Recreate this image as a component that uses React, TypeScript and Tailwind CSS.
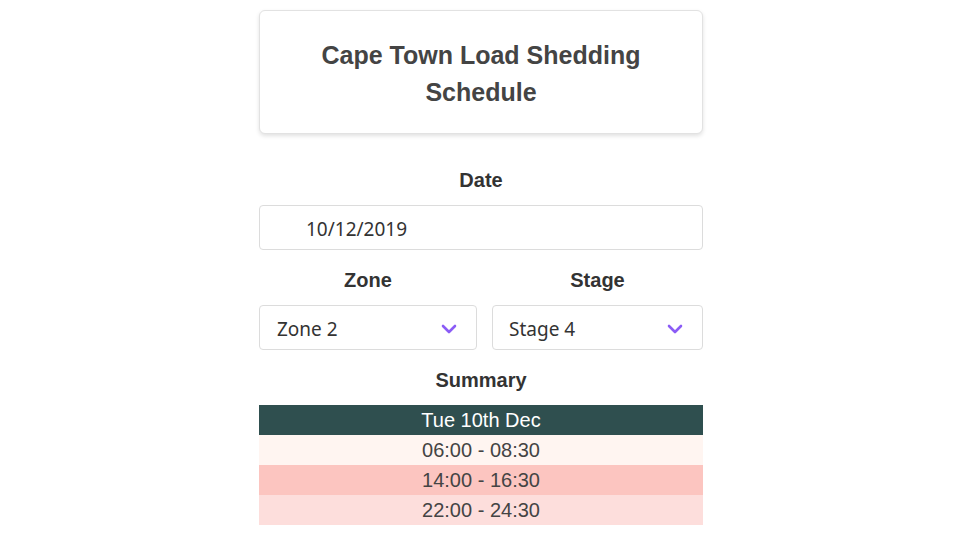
import React from "react";

const Chevron = () => (
  <svg width="16" height="10" viewBox="0 0 16 10" fill="none" className="translate-y-[1px]">
    <path d="M2 2 L8 8 L14 2" stroke="#8b5cf6" strokeWidth="2.6" strokeLinecap="round" strokeLinejoin="round" />
  </svg>
);

export default function App() {
  return (
    <div className="min-h-[540px] bg-white pl-[2px]" style={{ fontFamily: '"Liberation Sans", Arial, sans-serif' }}>
      <div className="mx-auto w-[444px] pt-[10px]">
        <div className="rounded-[6px] border border-[#e2e2e2] bg-white pb-[22px] pt-[26px] shadow-[0_2px_4px_rgba(0,0,0,0.12)]">
          <h1 className="text-center text-[25px] font-bold leading-[37px] text-[#444]">
            Cape Town Load Shedding
            <br />
            Schedule
          </h1>
        </div>

        <div className="mt-[31px] text-center text-[20px] font-bold leading-[30px] text-[#333]">Date</div>
        <div
          className="mt-[10px] flex h-[45px] items-center rounded-[4px] border border-[#dcdcdc] pl-[46px] text-[19px] text-[#333]"
          style={{ fontFamily: '"Noto Sans", "Open Sans", sans-serif' }}
        >
          <span className="translate-y-[2px]">10/12/2019</span>
        </div>

        <div className="mt-[15px] grid grid-cols-[218px_211px] gap-x-[15px]">
          <div className="text-center text-[20px] font-bold leading-[30px] text-[#333]">Zone</div>
          <div className="text-center text-[20px] font-bold leading-[30px] text-[#333]">Stage</div>
          <div
            className="mt-[10px] flex h-[45px] items-center justify-between rounded-[4px] border border-[#dcdcdc] pl-[17px] pr-[19px] text-[19px] text-[#333]"
            style={{ fontFamily: '"Noto Sans", "Open Sans", sans-serif' }}
          >
            <span className="translate-y-[2px]">Zone 2</span>
            <Chevron />
          </div>
          <div
            className="mt-[10px] flex h-[45px] items-center justify-between rounded-[4px] border border-[#dcdcdc] pl-[16px] pr-[19px] text-[19px] text-[#333]"
            style={{ fontFamily: '"Noto Sans", "Open Sans", sans-serif' }}
          >
            <span className="translate-y-[2px]">Stage 4</span>
            <Chevron />
          </div>
        </div>

        <div className="mt-[15px] text-center text-[20px] font-bold leading-[30px] text-[#333]">Summary</div>
        <div className="mt-[10px] text-center text-[20px] leading-[30px]">
          <div className="bg-[#2f4f4f] text-white">Tue 10th Dec</div>
          <div className="bg-[#fff5f1] text-[#444]">06:00 - 08:30</div>
          <div className="bg-[#fcc5c0] text-[#444]">14:00 - 16:30</div>
          <div className="bg-[#fddedc] text-[#444]">22:00 - 24:30</div>
        </div>
      </div>
    </div>
  );
}
